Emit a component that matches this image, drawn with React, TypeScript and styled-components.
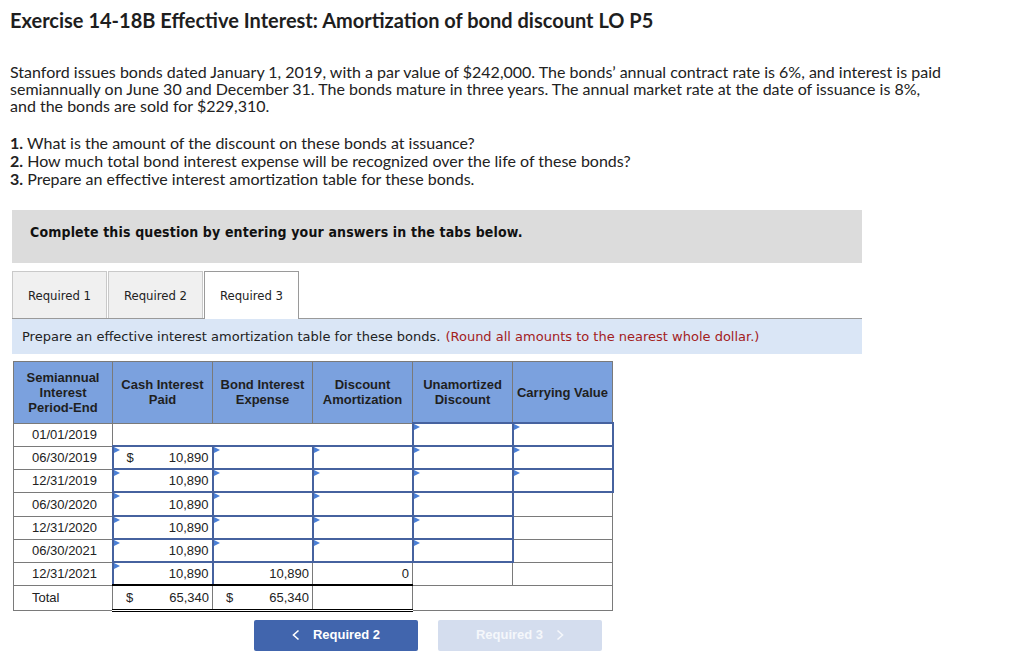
import React from "react";
import styled, { createGlobalStyle, css } from "styled-components";

const Global = createGlobalStyle`
  html, body { margin: 0; padding: 0; background: #fff; }
  body { font-family: Lato, "Liberation Sans", sans-serif; color: #222; }
`;

const Page = styled.div`
  padding: 10px 0 20px 10px;
`;

const Title = styled.h1`
  margin: 0;
  font: 700 20px/20px Lato, "Liberation Sans", sans-serif;
  color: #1e1e1e;
`;

const Para = styled.p`
  margin: 33px 0 0;
  font-size: 16px;
  line-height: 17px;
  white-space: nowrap;
`;

const List = styled.div`
  margin-top: 20px;
  font-size: 16px;
  line-height: 18px;
`;

const Panel = styled.div`
  margin: 22px 0 0 2px;
  width: 850px;
`;

const Notice = styled.div`
  height: 53px;
  box-sizing: border-box;
  padding: 14px 18px 0;
  background: #dcdcdc;
  font: 700 14px/16px "DejaVu Sans Condensed", "DejaVu Sans", sans-serif;
  font-stretch: condensed;
  letter-spacing: 0.15px;
  color: #111;
`;

const Tabs = styled.div`
  display: flex;
  gap: 1px;
  margin-top: 8px;
  align-items: flex-end;
`;

const Tab = styled.div<{ $active?: boolean }>`
  width: 95px;
  height: 47px;
  box-sizing: border-box;
  display: flex;
  align-items: center;
  justify-content: center;
  border: 1px solid #c9c9c9;
  border-bottom: none;
  background: #f0f0f0;
  font: 400 13px/15px "DejaVu Sans Condensed", "DejaVu Sans", sans-serif;
  font-stretch: condensed;
  color: #222;
  ${(p) =>
    p.$active &&
    css`
      background: #fff;
      border-color: #9a9a9a;
      height: 48px;
      margin-bottom: -1px;
      position: relative;
      z-index: 1;
    `}
`;

const TabBody = styled.div`
  border-top: 1px solid #9a9a9a;
`;

const Instruction = styled.div`
  height: 35px;
  display: flex;
  align-items: center;
  padding: 0 10px;
  background: #dae6f6;
  font: 400 13px/15px "DejaVu Sans", Verdana, sans-serif;
  color: #222;
`;

const Hint = styled.span`
  color: #a3211d;
  margin-left: 5px;
`;

const Table = styled.table`
  margin: 7px 0 0 1px;
  border-collapse: collapse;
  table-layout: fixed;
  width: 599px;
  font: 400 13px/15px "Liberation Sans", Arial, sans-serif;
  color: #222;
`;

const Th = styled.th`
  height: 60px;
  padding: 0 2px;
  background: #7ba1de;
  border: 1px solid #7a7a7a;
  font: 700 13px/15px "Liberation Sans", Arial, sans-serif;
  color: #1f1f1f;
  text-align: center;
  vertical-align: middle;
`;

const Tr = styled.tr<{ $h: number }>`
  height: ${(p) => p.$h}px;
`;

const DateTd = styled.td`
  padding: 0 0 0 18px;
  border: 1px solid #7a7a7a;
  text-align: left;
  white-space: nowrap;
`;

const Td = styled.td<{ $input?: boolean; $under?: boolean; $dbl?: boolean }>`
  position: relative;
  padding: 0 3px 0 13px;
  border: 1px solid #7a7a7a;
  white-space: nowrap;
  ${(p) =>
    p.$input &&
    css`
      border: 2px solid #46629f;
    `}
  ${(p) =>
    p.$under &&
    css`
      border-bottom: 2px solid #000;
    `}
  ${(p) =>
    p.$dbl &&
    css`
      border-bottom: 3px double #000;
    `}
`;

const Flag = styled.span`
  position: absolute;
  top: 0;
  left: 0;
  width: 0;
  height: 0;
  border-left: 6px solid #4a7fd6;
  border-top: 3.5px solid transparent;
  border-bottom: 3.5px solid transparent;
`;

const Amount = styled.div`
  display: flex;
  justify-content: space-between;
  align-items: center;
`;

const Num = styled.span`
  margin-left: auto;
`;

const Nav = styled.div`
  display: flex;
  gap: 20px;
  margin-top: 8px;
  padding-left: 242px;
`;

const NavButton = styled.div<{ $disabled?: boolean }>`
  width: 164px;
  height: 31px;
  box-sizing: border-box;
  border-radius: 2px;
  display: flex;
  align-items: center;
  justify-content: center;
  gap: 13px;
  background: ${(p) => (p.$disabled ? "#d4ddee" : "#4165ad")};
  color: ${(p) => (p.$disabled ? "#f5f7fb" : "#fff")};
  font: 700 13px/16px "Liberation Sans", Arial, sans-serif;
`;

const Chevron = ({ dir }: { dir: "left" | "right" }) => (
  <svg width="8" height="12" viewBox="0 0 8 12" aria-hidden="true">
    <polyline
      points={dir === "left" ? "6.5,1.5 1.5,6 6.5,10.5" : "1.5,1.5 6.5,6 1.5,10.5"}
      fill="none"
      stroke="currentColor"
      strokeWidth="1.6"
    />
  </svg>
);

type Cell = {
  kind: "input" | "plain";
  dollar?: boolean;
  value?: string;
  span?: number;
  under?: boolean;
  dbl?: boolean;
};

type Row = { date: string; h: number; cells: Cell[] };

const I = (value?: string, dollar?: boolean, under?: boolean): Cell => ({
  kind: "input",
  value,
  dollar,
  under,
});
const P = (value?: string, extra: Partial<Cell> = {}): Cell => ({
  kind: "plain",
  value,
  ...extra,
});

const rows: Row[] = [
  { date: "01/01/2019", h: 23, cells: [P(undefined, { span: 3 }), I(), I()] },
  { date: "06/30/2019", h: 23, cells: [I("10,890", true), I(), I(), I(), I()] },
  { date: "12/31/2019", h: 23, cells: [I("10,890"), I(), I(), I(), I()] },
  { date: "06/30/2020", h: 24, cells: [I("10,890"), I(), I(), I(), P()] },
  { date: "12/31/2020", h: 23, cells: [I("10,890"), I(), I(), I(), P()] },
  { date: "06/30/2021", h: 23, cells: [I("10,890"), I(), I(), I(), P()] },
  {
    date: "12/31/2021",
    h: 23,
    cells: [
      I("10,890", false, true),
      P("10,890", { under: true }),
      P("0", { under: true }),
      P(),
      P(),
    ],
  },
  {
    date: "Total",
    h: 25,
    cells: [
      P("65,340", { dollar: true, dbl: true }),
      P("65,340", { dollar: true, dbl: true }),
      P(undefined, { dbl: true }),
      P(undefined, { span: 2 }),
    ],
  },
];

const headers = [
  ["Semiannual", "Interest", "Period-End"],
  ["Cash Interest", "Paid"],
  ["Bond Interest", "Expense"],
  ["Discount", "Amortization"],
  ["Unamortized", "Discount"],
  ["Carrying Value"],
];

const colWidths = [99, 100, 100, 100, 100, 100];

export default function App() {
  return (
    <>
      <Global />
      <Page>
        <Title>Exercise 14-18B Effective Interest: Amortization of bond discount LO P5</Title>
        <Para>
          Stanford issues bonds dated January 1, 2019, with a par value of $242,000. The bonds’ annual contract rate is 6%, and interest is paid
          <br />
          semiannually on June 30 and December 31. The bonds mature in three years. The annual market rate at the date of issuance is 8%,
          <br />
          and the bonds are sold for $229,310.
        </Para>
        <List>
          <div>
            <b>1.</b> What is the amount of the discount on these bonds at issuance?
          </div>
          <div>
            <b>2.</b> How much total bond interest expense will be recognized over the life of these bonds?
          </div>
          <div>
            <b>3.</b> Prepare an effective interest amortization table for these bonds.
          </div>
        </List>
        <Panel>
          <Notice>Complete this question by entering your answers in the tabs below.</Notice>
          <Tabs>
            <Tab>Required 1</Tab>
            <Tab>Required 2</Tab>
            <Tab $active>Required 3</Tab>
          </Tabs>
          <TabBody>
            <Instruction>
              Prepare an effective interest amortization table for these bonds.
              <Hint>(Round all amounts to the nearest whole dollar.)</Hint>
            </Instruction>
            <Table>
              <colgroup>
                {colWidths.map((w, i) => (
                  <col key={i} style={{ width: w }} />
                ))}
              </colgroup>
              <thead>
                <tr>
                  {headers.map((lines, i) => (
                    <Th key={i}>
                      {lines.map((l, j) => (
                        <React.Fragment key={j}>
                          {j > 0 && <br />}
                          {l}
                        </React.Fragment>
                      ))}
                    </Th>
                  ))}
                </tr>
              </thead>
              <tbody>
                {rows.map((r) => (
                  <Tr key={r.date} $h={r.h}>
                    <DateTd>{r.date}</DateTd>
                    {r.cells.map((c, i) => (
                      <Td
                        key={i}
                        colSpan={c.span}
                        $input={c.kind === "input"}
                        $under={c.under}
                        $dbl={c.dbl}
                      >
                        {c.kind === "input" && <Flag />}
                        {(c.value || c.dollar) && (
                          <Amount>
                            {c.dollar && <span>$</span>}
                            {c.value && <Num>{c.value}</Num>}
                          </Amount>
                        )}
                      </Td>
                    ))}
                  </Tr>
                ))}
              </tbody>
            </Table>
          </TabBody>
          <Nav>
            <NavButton>
              <Chevron dir="left" />
              <span>Required 2</span>
            </NavButton>
            <NavButton $disabled>
              <span>Required 3</span>
              <Chevron dir="right" />
            </NavButton>
          </Nav>
        </Panel>
      </Page>
    </>
  );
}
